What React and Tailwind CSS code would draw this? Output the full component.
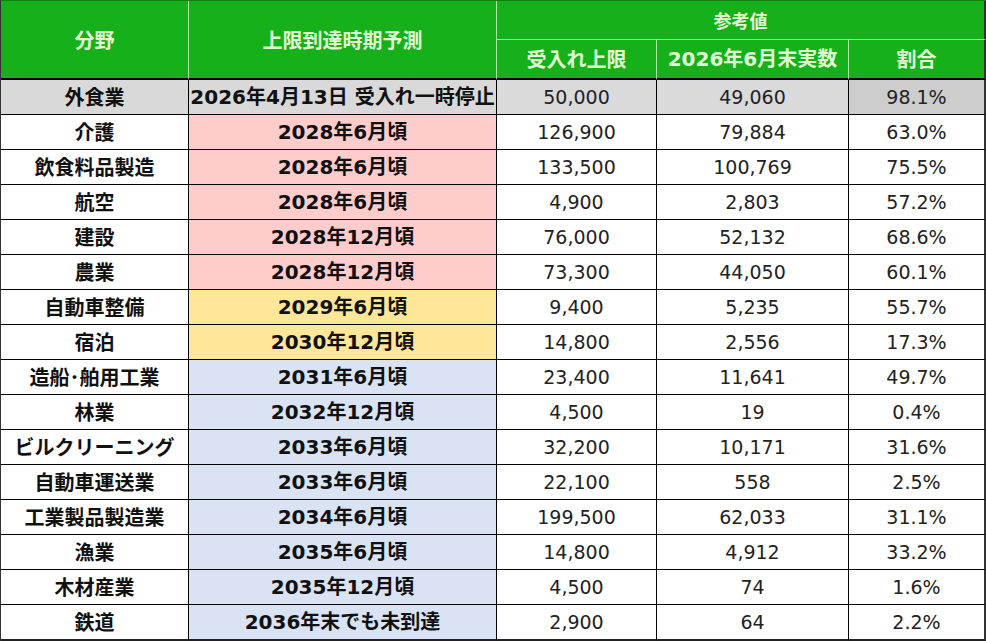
import React from "react";

const rows = [
  ["外食業", "2026年4月13日 受入れ一時停止", "50,000", "49,060", "98.1%", "gray"],
  ["介護", "2028年6月頃", "126,900", "79,884", "63.0%", "pink"],
  ["飲食料品製造", "2028年6月頃", "133,500", "100,769", "75.5%", "pink"],
  ["航空", "2028年6月頃", "4,900", "2,803", "57.2%", "pink"],
  ["建設", "2028年12月頃", "76,000", "52,132", "68.6%", "pink"],
  ["農業", "2028年12月頃", "73,300", "44,050", "60.1%", "pink"],
  ["自動車整備", "2029年6月頃", "9,400", "5,235", "55.7%", "yellow"],
  ["宿泊", "2030年12月頃", "14,800", "2,556", "17.3%", "yellow"],
  ["造船･舶用工業", "2031年6月頃", "23,400", "11,641", "49.7%", "blue"],
  ["林業", "2032年12月頃", "4,500", "19", "0.4%", "blue"],
  ["ビルクリーニング", "2033年6月頃", "32,200", "10,171", "31.6%", "blue"],
  ["自動車運送業", "2033年6月頃", "22,100", "558", "2.5%", "blue"],
  ["工業製品製造業", "2034年6月頃", "199,500", "62,033", "31.1%", "blue"],
  ["漁業", "2035年6月頃", "14,800", "4,912", "33.2%", "blue"],
  ["木材産業", "2035年12月頃", "4,500", "74", "1.6%", "blue"],
  ["鉄道", "2036年末でも未到達", "2,900", "64", "2.2%", "blue"],
];

const predBg = {
  gray: "bg-[#d9d9d9]",
  pink: "bg-[#ffcccc]",
  yellow: "bg-[#ffe699]",
  blue: "bg-[#dae3f3]",
};

const bold = "font-['DejaVu_Sans','Noto_Sans_CJK_JP',sans-serif] font-bold";
const jpBold = "font-['Noto_Sans_CJK_JP','DejaVu_Sans',sans-serif] font-bold";
const num = "font-['DejaVu_Sans','Noto_Sans_CJK_JP',sans-serif]";

export default function App() {
  return (
    <div className="w-[986px] h-[641px] bg-white border-l border-t border-l-[#333] border-t-[#0f7f12] overflow-hidden">
      <div className="grid grid-cols-[188px_308px_160px_192px_137px] grid-rows-[39px_40px] bg-[#16b01b] text-[#e0f9d2]">
        <div className={`row-span-2 border-r border-r-[#a6ee98] border-b-2 border-b-black flex items-center justify-center text-[20px] ${jpBold}`}>分野</div>
        <div className={`row-span-2 border-r border-r-[#a6ee98] border-b-2 border-b-black flex items-center justify-center text-[20px] ${jpBold}`}>上限到達時期予測</div>
        <div className={`col-span-3 border-b border-b-[#a6ee98] border-r-2 border-r-[#333] flex items-center justify-center text-[18px] ${jpBold}`}>参考値</div>
        <div className={`border-r border-r-[#a6ee98] border-b-2 border-b-black flex items-center justify-center text-[20px] ${jpBold}`}>受入れ上限</div>
        <div className={`border-r border-r-[#a6ee98] border-b-2 border-b-black flex items-center justify-center text-[20px] ${bold}`}>2026年6月末実数</div>
        <div className={`border-r-2 border-r-[#333] border-b-2 border-b-black flex items-center justify-center text-[20px] ${jpBold}`}>割合</div>
      </div>
      {rows.map((r, i) => {
        const last = i === rows.length - 1;
        const gray = r[5] === "gray";
        const rowH = last ? "h-[36px]" : "h-[35px]";
        const bb = last ? "border-b-2 border-b-[#222]" : "border-b border-b-black";
        return (
          <div key={i} className={`grid grid-cols-[188px_308px_160px_192px_137px] ${rowH}`}>
            <div className={`${gray ? "bg-[#d9d9d9]" : "bg-white"} border-r border-r-black ${bb} flex items-center justify-center text-[20px] text-[#111] ${jpBold}`}>{r[0]}</div>
            <div className={`${predBg[r[5]]} border-r border-r-black ${bb} flex items-center justify-center text-[20px] text-[#111] ${bold}`}>{r[1]}</div>
            <div className={`${gray ? "bg-[#dadada]" : "bg-white"} border-r border-r-black ${bb} flex items-center justify-center text-[19px] text-[#222] ${num}`}>{r[2]}</div>
            <div className={`${gray ? "bg-[#dadada]" : "bg-white"} border-r border-r-black ${bb} flex items-center justify-center text-[19px] text-[#222] ${num}`}>{r[3]}</div>
            <div className={`${gray ? "bg-[#cdcdcd]" : "bg-white"} border-r-2 border-r-[#333] ${bb} flex items-center justify-center text-[19px] text-[#222] ${num}`}>{r[4]}</div>
          </div>
        );
      })}
    </div>
  );
}
